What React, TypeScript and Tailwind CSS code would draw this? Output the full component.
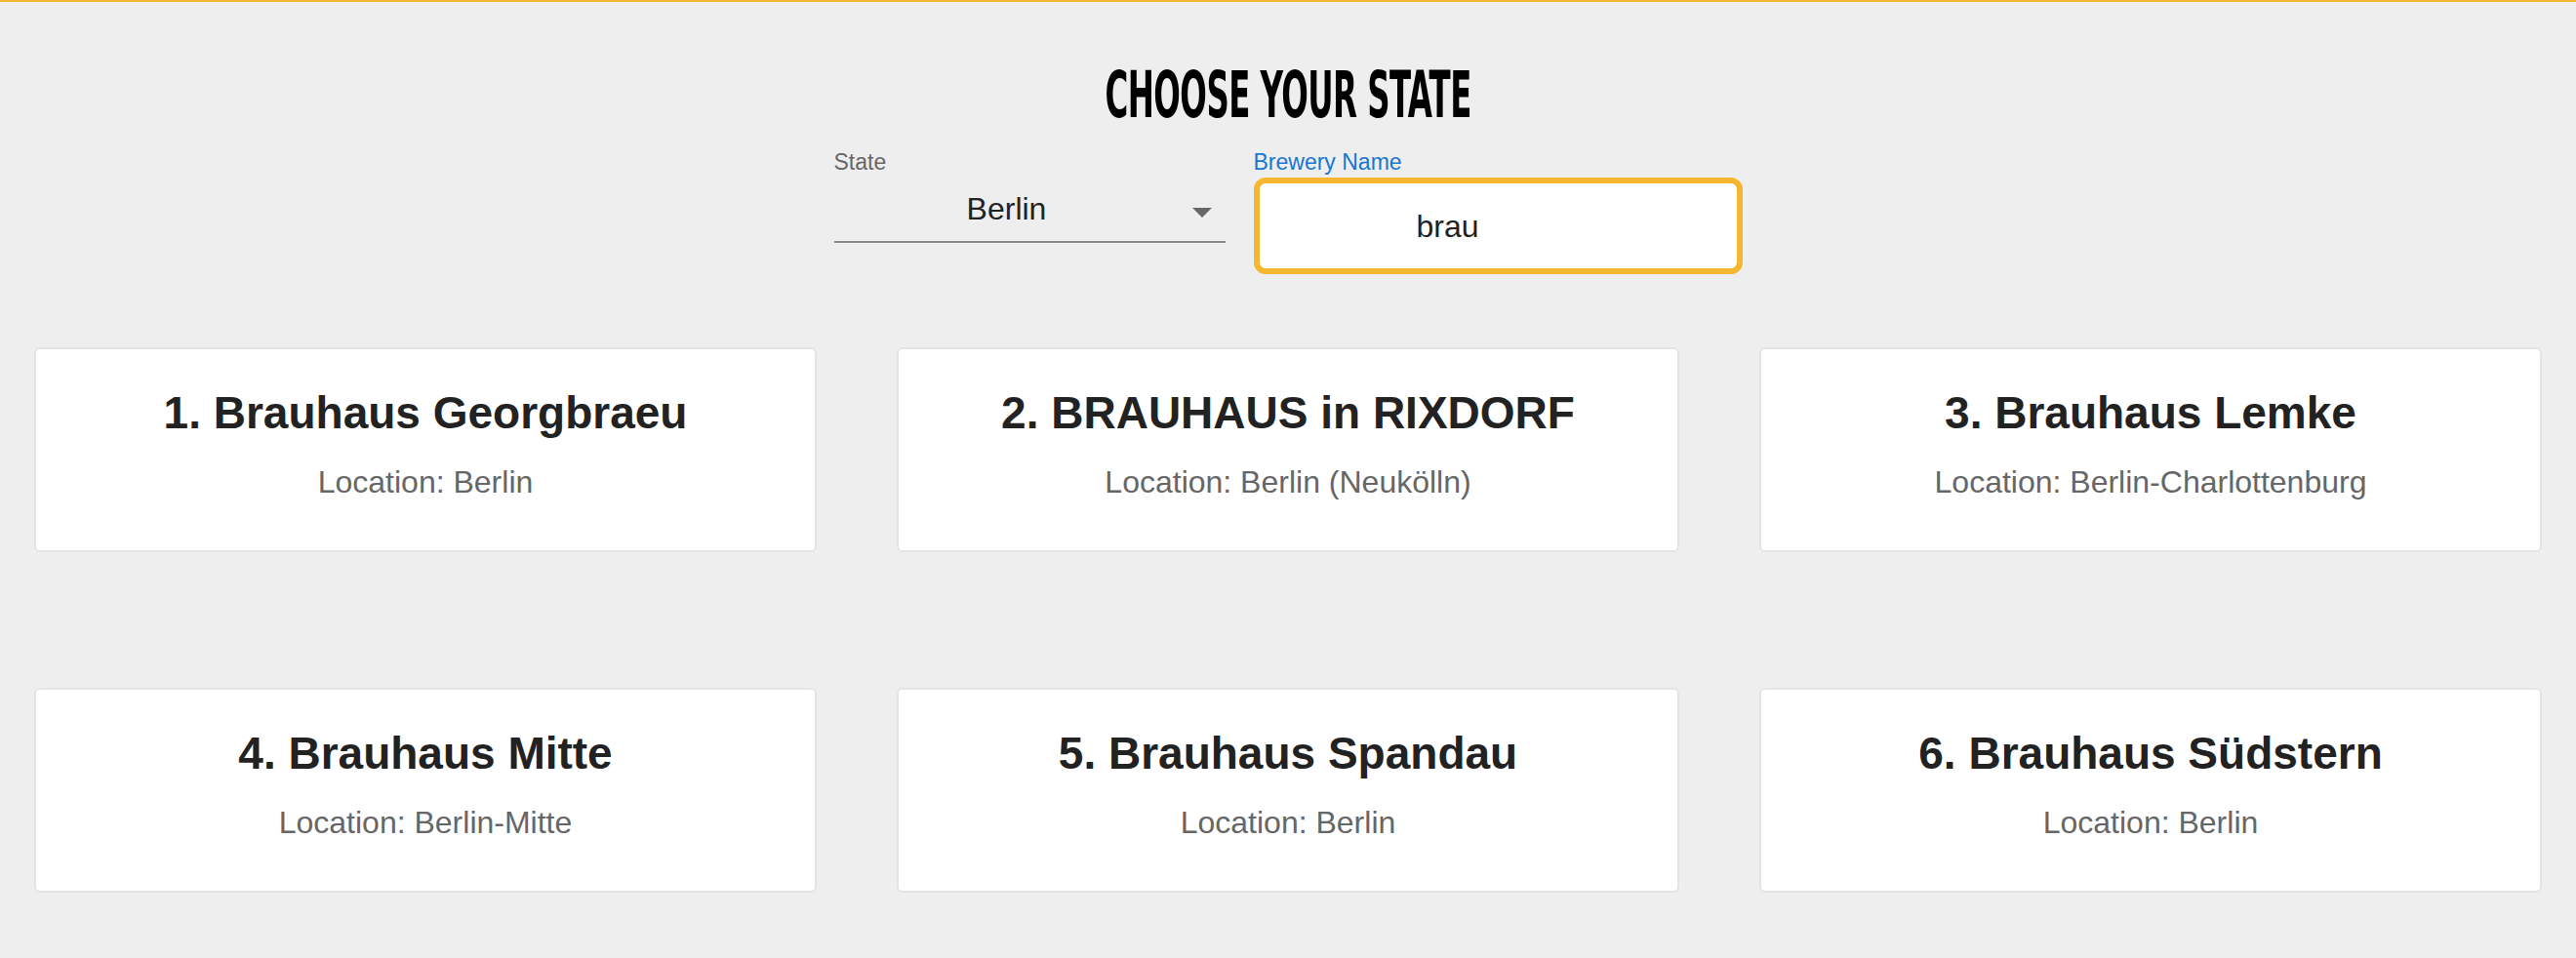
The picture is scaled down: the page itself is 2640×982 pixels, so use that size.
const breweries = [
  { id: 1, name: "Brauhaus Georgbraeu", city: "Berlin" },
  { id: 2, name: "BRAUHAUS in RIXDORF", city: "Berlin (Neukölln)" },
  { id: 3, name: "Brauhaus Lemke", city: "Berlin-Charlottenburg" },
  { id: 4, name: "Brauhaus Mitte", city: "Berlin-Mitte" },
  { id: 5, name: "Brauhaus Spandau", city: "Berlin" },
  { id: 6, name: "Brauhaus Südstern", city: "Berlin" },
];

export default function App() {
  return (
    <div className="min-h-screen bg-[#eeeeee] font-['Liberation_Sans',Arial,sans-serif]">
      <div className="h-[2px] bg-[#f4b730]" />

      {/* Heading */}
      <div className="mt-[63px] flex justify-center">
        <h1 className="inline-block scale-x-[0.555] font-['DejaVu_Sans',sans-serif] text-[65px] font-bold leading-none tracking-[-1px] text-black [font-stretch:condensed]">
          CHOOSE YOUR STATE
        </h1>
      </div>

      {/* Form */}
      <div className="mt-[25px] flex justify-center gap-[29px]">
        <div className="w-[401px]">
          <div className="text-[23px] leading-none text-[#666666]">State</div>
          <div className="relative border-b-2 border-[#8a8a8a] pb-[15px] pt-[20px] pr-[47px] text-center">
            <span className="text-[32px] leading-none text-[#222222]">Berlin</span>
            <svg className="absolute right-[14px] top-[35px] h-[10px] w-[20px]" viewBox="0 0 20 10">
              <path d="M0 0h20L10 10z" fill="#666666" />
            </svg>
          </div>
        </div>
        <div className="w-[501px]">
          <div className="text-[23px] leading-none text-[#1976d2]">Brewery Name</div>
          <div className="mt-[4px] flex h-[99px] items-center rounded-[12px] border-[6px] border-[#f5b731] bg-white pl-[161px]">
            <span className="text-[32px] leading-none text-[#222222]">brau</span>
          </div>
        </div>
      </div>

      {/* Results */}
      <div className="mt-[75px] grid grid-cols-3 gap-x-[82px] gap-y-[139px] px-[35px]">
        {breweries.map((b) => (
          <div
            key={b.id}
            className="h-[210px] rounded-[6px] border-2 border-[#e4e4e4] bg-white pt-[38px] text-center"
          >
            <div className="text-[46px] font-bold leading-[1.2] text-[#222222]">
              {b.id}. {b.name}
            </div>
            <div className="mt-[24px] text-[32px] leading-[1.2] text-[#666666]">
              Location: {b.city}
            </div>
          </div>
        ))}
      </div>
    </div>
  );
}
